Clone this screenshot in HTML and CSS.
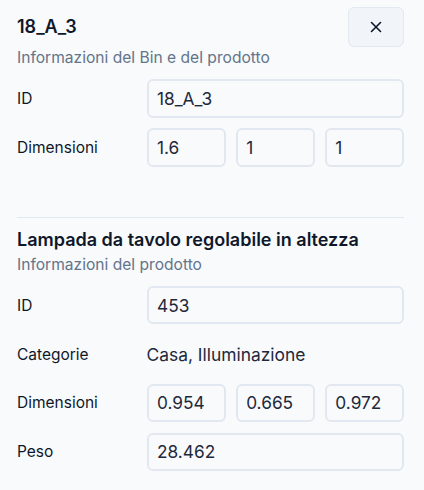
FILE: index.html
```html
<!DOCTYPE html>
<html lang="it">
<head>
<meta charset="utf-8">
<link rel="stylesheet" href="styles.css">
</head>
<body>
<div class="panel">
  <div class="header">
    <h2 class="title">18_A_3</h2>
    <button class="close" aria-label="Chiudi">
      <svg width="12" height="12" viewBox="0 0 12 12"><path d="M1.5 1.5 L10.5 10.5 M10.5 1.5 L1.5 10.5" stroke="#0f172a" stroke-width="1.6" stroke-linecap="round" fill="none"/></svg>
    </button>
  </div>
  <p class="subtitle">Informazioni del Bin e del prodotto</p>
  <div class="form">
    <span class="label">ID</span>
    <div class="field">18_A_3</div>
    <span class="label">Dimensioni</span>
    <div class="triple">
      <div class="field">1.6</div>
      <div class="field">1</div>
      <div class="field">1</div>
    </div>
  </div>

  <hr class="sep">

  <h2 class="title title2">Lampada da tavolo regolabile in altezza</h2>
  <p class="subtitle subtitle2">Informazioni del prodotto</p>
  <div class="form">
    <span class="label">ID</span>
    <div class="field">453</div>
    <span class="label">Categorie</span>
    <span class="value">Casa, Illuminazione</span>
    <span class="label">Dimensioni</span>
    <div class="triple">
      <div class="field">0.954</div>
      <div class="field">0.665</div>
      <div class="field">0.972</div>
    </div>
    <span class="label">Peso</span>
    <div class="field">28.462</div>
  </div>
</div>
</body>
</html>
```
FILE: styles.css
```css
html, body {
  margin: 0;
  padding: 0;
  background: #f8fafc;
}
body {
  font-family: Inter, "Noto Sans", sans-serif;
  color: #0f172a;
}
.panel {
  padding: 7px 20px 0 17px;
}
.header {
  display: flex;
  align-items: center;
  justify-content: space-between;
  height: 40px;
}
.title {
  margin: 0;
  font-size: 18px;
  line-height: 24px;
  font-weight: 600;
  color: #0f172a;
}
.close {
  width: 56px;
  height: 40px;
  box-sizing: border-box;
  border: 1px solid #e2e8f0;
  background: #f1f5f9;
  border-radius: 6px;
  display: flex;
  align-items: center;
  justify-content: center;
  padding: 0;
}
.subtitle {
  margin: 1px 0 0;
  font-size: 15.6px;
  line-height: 20px;
  color: #64748b;
}
.subtitle2 {
  margin-top: 3px;
}
.form {
  margin-top: 11px;
  display: grid;
  grid-template-columns: 129.5px 1fr;
  grid-auto-rows: 38.75px;
  row-gap: 10.2px;
  align-items: center;
}
.label {
  font-size: 15.5px;
  color: #0f172a;
}
.value {
  font-size: 17.4px;
  color: #1e293b;
}
.field {
  height: 38.75px;
  box-sizing: border-box;
  border: 2px solid #e2e8f0;
  border-radius: 6px;
  padding: 0 8.5px;
  display: flex;
  align-items: center;
  font-size: 17.3px;
  color: #1e293b;
  background: #f8fafc;
}
.triple {
  display: grid;
  grid-template-columns: 1fr 1fr 1fr;
  column-gap: 10px;
}
.sep {
  margin: 50px 0 0;
  border: 0;
  border-top: 1px solid #e2e8f0;
}
.title2 {
  margin-top: 10px;
}
```
